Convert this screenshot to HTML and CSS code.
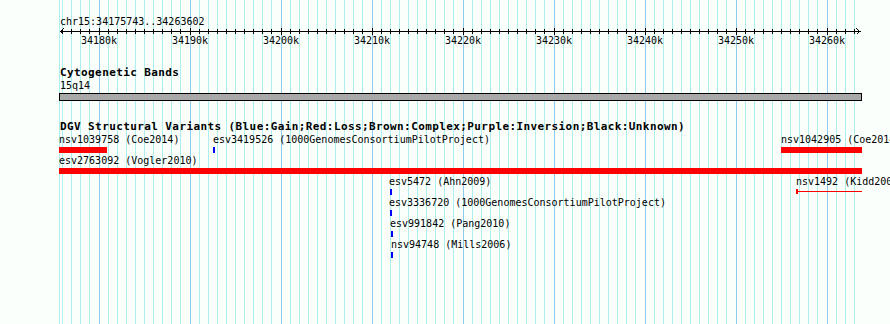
FILE: index.html
```html
<!DOCTYPE html>
<html>
<head>
<meta charset="utf-8">
<title>DGV browser</title>
<link rel="stylesheet" href="styles.css">
</head>
<body>
<div class="panel">
  <div class="grid" id="grid"></div>

  <section class="ruler">
    <div class="ruler-label">chr15:34175743..34263602</div>
    <svg class="axis" id="axis" width="890" height="8" viewBox="0 0 890 8"></svg>
    <div class="tick-labels" id="ticklabels"></div>
  </section>

  <section class="track cyto">
    <div class="track-title">Cytogenetic Bands</div>
    <div class="band-label">15q14</div>
    <div class="band"></div>
  </section>

  <section class="track dgv">
    <div class="track-title">DGV Structural Variants (Blue:Gain;Red:Loss;Brown:Complex;Purple:Inversion;Black:Unknown)</div>
    <div class="row">
      <div class="feat" style="left:59px"><span class="label">nsv1039758 (Coe2014)</span><div class="bar loss" style="width:48px"></div></div>
      <div class="feat" style="left:213px"><span class="label">esv3419526 (1000GenomesConsortiumPilotProject)</span><div class="bar gain" style="width:2px"></div></div>
      <div class="feat" style="left:781px"><span class="label">nsv1042905 (Coe2014)</span><div class="bar loss" style="width:81px"></div></div>
    </div>
    <div class="row">
      <div class="feat" style="left:59px"><span class="label">esv2763092 (Vogler2010)</span><div class="bar loss" style="width:803px"></div></div>
    </div>
    <div class="row">
      <div class="feat" style="left:389px"><span class="label">esv5472 (Ahn2009)</span><div class="bar gain tick1" style="width:2px"></div></div>
      <div class="feat" style="left:796px"><span class="label">nsv1492 (Kidd2008)</span><div class="bar-line" style="width:66px"></div></div>
    </div>
    <div class="row">
      <div class="feat" style="left:389px"><span class="label">esv3336720 (1000GenomesConsortiumPilotProject)</span><div class="bar gain tick1" style="width:2px"></div></div>
    </div>
    <div class="row">
      <div class="feat" style="left:390px"><span class="label">esv991842 (Pang2010)</span><div class="bar gain tick1" style="width:2px"></div></div>
    </div>
    <div class="row">
      <div class="feat" style="left:391px"><span class="label">nsv94748 (Mills2006)</span><div class="bar gain" style="width:2px"></div></div>
    </div>
  </section>
</div>
<script src="script.js"></script>
</body>
</html>
```

FILE: styles.css
```css
html, body {
  margin: 0;
  padding: 0;
  background: #fbfffb;
}

.panel {
  position: relative;
  z-index: 0;
  width: 890px;
  height: 324px;
  overflow: hidden;
  font-family: "DejaVu Sans Mono", "Liberation Mono", monospace;
  font-size: 10px;
  line-height: 11px;
  color: #000;
}

.grid {
  position: absolute;
  left: 0;
  top: 0;
  width: 890px;
  height: 324px;
  z-index: -1;
}

.gl {
  position: absolute;
  top: 0;
  width: 1px;
  height: 324px;
  background: #afeeee;
}

.gl.major {
  background: #8ccbef;
}

.ruler {
  height: 46px;
}

.ruler-label {
  padding-top: 16px;
  padding-left: 60px;
  height: 11px;
  white-space: nowrap;
}

.axis {
  display: block;
  shape-rendering: crispEdges;
}

.axis line, .axis polyline {
  stroke: #000;
  stroke-width: 1;
  fill: none;
}

.tick-labels {
  position: relative;
  height: 11px;
}

.tick-label {
  position: absolute;
  top: 0;
  width: 36px;
  text-align: center;
  white-space: nowrap;
}

.track-title {
  font-weight: bold;
  font-size: 11px;
  letter-spacing: 0.4px;
  line-height: 12px;
  height: 12px;
  padding-left: 60px;
  white-space: nowrap;
}

.cyto {
  padding-top: 21px;
}

.band-label {
  margin-top: 1px;
  padding-left: 60px;
  height: 11px;
}

.band {
  margin-top: 2px;
  margin-left: 59px;
  width: 801px;
  height: 6px;
  background: #a9a9a9;
  border: 1px solid #000;
}

.dgv {
  padding-top: 20px;
}

.dgv .track-title {
  margin-bottom: 1px;
}

.row {
  position: relative;
  height: 21px;
}

.feat {
  position: absolute;
  top: 0;
}

.label {
  display: block;
  height: 11px;
  white-space: nowrap;
}

.bar {
  margin-top: 2px;
  height: 6px;
}

.bar.tick1 {
  margin-left: 1px;
}

.loss {
  background: #ff0000;
}

.gain {
  background: #0000ff;
}

.bar-line {
  position: relative;
  margin-top: 2px;
  height: 6px;
}

.bar-line::before {
  content: "";
  position: absolute;
  left: 0;
  right: 0;
  top: 2px;
  height: 1px;
  background: #ff0000;
}

.bar-line::after {
  content: "";
  position: absolute;
  left: 0;
  top: 0;
  width: 2px;
  height: 5px;
  background: #ff0000;
}
```

FILE: script.js
```js
(function () {
  var START = 34175743;
  var X0 = 60.3;
  var SCALE = 0.0091;
  var NS = "http://www.w3.org/2000/svg";
  var grid = document.getElementById("grid");
  var axis = document.getElementById("axis");
  var labels = document.getElementById("ticklabels");

  function px(bp) {
    return Math.floor(X0 + (bp - START) * SCALE);
  }

  function addGrid(x, major) {
    var d = document.createElement("div");
    d.className = major ? "gl major" : "gl";
    d.style.left = x + "px";
    grid.appendChild(d);
  }

  function addLine(x1, y1, x2, y2) {
    var l = document.createElementNS(NS, "line");
    l.setAttribute("x1", x1);
    l.setAttribute("y1", y1);
    l.setAttribute("x2", x2);
    l.setAttribute("y2", y2);
    axis.appendChild(l);
  }

  function addPoly(points) {
    var p = document.createElementNS(NS, "polyline");
    p.setAttribute("points", points);
    axis.appendChild(p);
  }

  addGrid(59, false);

  for (var k = 34176; k <= 34263; k++) {
    var x = px(k * 1000);
    var major = k % 10 === 0;
    addGrid(x, major);
    if (major) {
      addLine(x + 0.5, 1, x + 0.5, 8);
      var t = document.createElement("div");
      t.className = "tick-label";
      t.style.left = (x - 18) + "px";
      t.textContent = k + "k";
      labels.appendChild(t);
    } else {
      addLine(x + 0.5, 2, x + 0.5, 7);
    }
  }

  addLine(60, 4.5, 861, 4.5);
  addPoly("63.5,1.5 60.5,4.5 63.5,7.5");
  addPoly("856.5,1.5 859.5,4.5 856.5,7.5");
})();
```
